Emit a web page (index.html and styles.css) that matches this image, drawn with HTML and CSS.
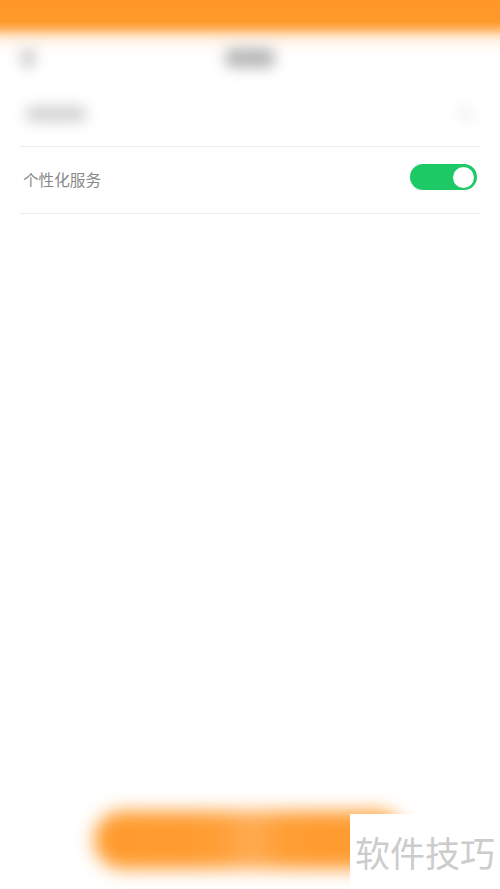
FILE: index.html
```html
<!DOCTYPE html>
<html lang="zh-CN">
<head>
<meta charset="utf-8">
<title>个性化服务</title>
<link rel="stylesheet" href="styles.css">
</head>
<body>
<div class="page">
  <header class="header">
    <div class="nav">
      <span class="blob back"></span>
      <span class="blob title"></span>
      <span class="nav-spacer"></span>
    </div>
  </header>
  <main class="list">
    <div class="row row-first">
      <span class="blob row-label"></span>
      <span class="blob arrow"></span>
    </div>
    <div class="row row-second">
      <span class="label">个性化服务</span>
      <span class="toggle"><span class="knob"></span></span>
    </div>
  </main>
  <footer class="footer">
    <div class="button"></div>
  </footer>
</div>
<div class="watermark">软件技巧</div>
</body>
</html>
```

FILE: styles.css
```css
html, body {
  margin: 0;
  padding: 0;
  background: #ffffff;
  font-family: "Noto Sans CJK SC", "Noto Sans", sans-serif;
}

.page {
  display: flex;
  flex-direction: column;
  min-height: 889px;
}

.header {
  height: 82px;
  background: linear-gradient(to bottom, #ff9726 0px, #ff9a2a 22px, #ffb565 29px, #ffdcb6 35px, #fff2e4 41px, #fffaf5 47px, #ffffff 56px);
}

.nav {
  display: flex;
  align-items: center;
  justify-content: space-between;
  padding: 46px 20px 0 20px;
  height: 24px;
}

.blob {
  display: block;
  filter: blur(7px);
  border-radius: 8px;
}

.back {
  width: 16px;
  height: 20px;
  background: #cfcfcf;
}

.title {
  width: 50px;
  height: 20px;
  background: #b8b8b8;
}

.nav-spacer {
  width: 16px;
}

.list {
  flex: 1;
  margin: 0 20px;
}

.row {
  display: flex;
  align-items: center;
  justify-content: space-between;
  border-bottom: 1px solid #ececec;
}

.row-first {
  height: 64px;
}

.row-second {
  height: 66px;
}

.row-label {
  width: 62px;
  height: 16px;
  margin-left: 5px;
  background: #d2d2d2;
}

.arrow {
  width: 12px;
  height: 16px;
  margin-right: 8px;
  background: #eeeeee;
}

.label {
  margin-left: 3px;
  margin-bottom: 2px;
  font-size: 15.6px;
  color: #888888;
}

.toggle {
  position: relative;
  display: block;
  width: 67px;
  height: 26px;
  margin-right: 3px;
  margin-bottom: 6px;
  border-radius: 13px;
  background: #1cc965;
}

.knob {
  position: absolute;
  top: 2.5px;
  right: 3.5px;
  width: 21px;
  height: 21px;
  border-radius: 50%;
  background: #ffffff;
}

.footer {
  display: flex;
  justify-content: center;
  padding: 0 0 20px 0;
}

.button {
  width: 312px;
  height: 58px;
  border-radius: 29px;
  background: linear-gradient(to right, #ff9a2c 0%, #ff9d33 38%, #ffab52 50%, #ff9d33 62%, #ff9a2c 100%);
  filter: blur(9px);
}

.watermark {
  position: absolute;
  right: 0;
  bottom: 0;
  width: 150px;
  height: 75px;
  background: #ffffff;
  color: #cccccc;
  font-size: 35px;
  line-height: 75px;
  text-align: center;
}
```
